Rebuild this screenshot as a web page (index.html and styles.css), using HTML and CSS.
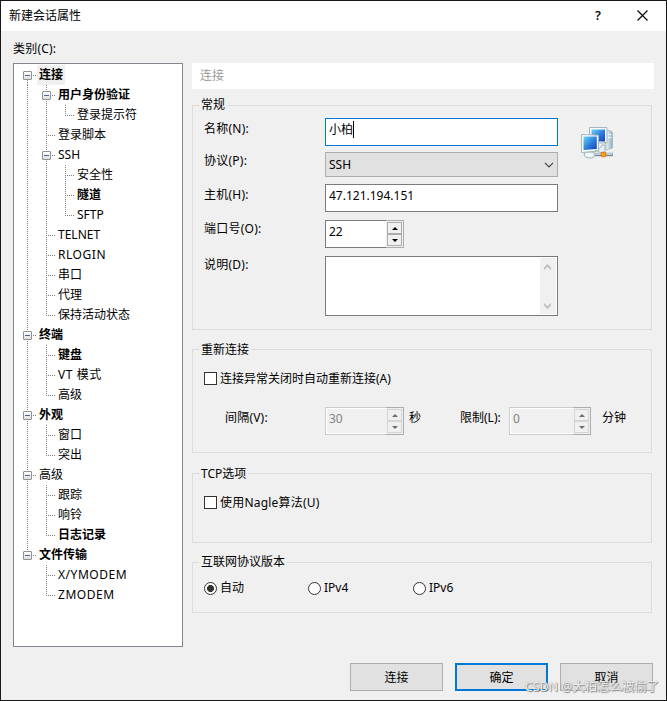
FILE: index.html
```html
<!DOCTYPE html>
<html lang="zh-CN">
<head>
<meta charset="utf-8">
<title>新建会话属性</title>
<link rel="stylesheet" href="styles.css">
</head>
<body>
<div class="window">
  <header class="titlebar">
    <span class="title">新建会话属性</span>
    <span class="help">?</span>
    <svg class="close" width="11" height="11" viewBox="0 0 11 11"><path d="M.5.5l10 10M10.5.5l-10 10" stroke="#000" stroke-width="1.1"/></svg>
  </header>
  <div class="category">类别(C):</div>
  <main class="content">
    <div class="tree">
      <div class="row"><i class="c box first"></i><b class="selected">连接</b></div>
      <div class="row"><i class="c v"></i><i class="c box"></i><b>用户身份验证</b></div>
      <div class="row"><i class="c v"></i><i class="c v"></i><i class="c l"></i><span>登录提示符</span></div>
      <div class="row"><i class="c v"></i><i class="c t"></i><span>登录脚本</span></div>
      <div class="row"><i class="c v"></i><i class="c box"></i><span>SSH</span></div>
      <div class="row"><i class="c v"></i><i class="c v"></i><i class="c t"></i><span>安全性</span></div>
      <div class="row"><i class="c v"></i><i class="c v"></i><i class="c t"></i><b>隧道</b></div>
      <div class="row"><i class="c v"></i><i class="c v"></i><i class="c l"></i><span>SFTP</span></div>
      <div class="row"><i class="c v"></i><i class="c t"></i><span>TELNET</span></div>
      <div class="row"><i class="c v"></i><i class="c t"></i><span class="loose">RLOGIN</span></div>
      <div class="row"><i class="c v"></i><i class="c t"></i><span>串口</span></div>
      <div class="row"><i class="c v"></i><i class="c t"></i><span>代理</span></div>
      <div class="row"><i class="c v"></i><i class="c l"></i><span>保持活动状态</span></div>
      <div class="row"><i class="c box"></i><b>终端</b></div>
      <div class="row"><i class="c v"></i><i class="c t"></i><b>键盘</b></div>
      <div class="row"><i class="c v"></i><i class="c t"></i><span class="loose">VT 模式</span></div>
      <div class="row"><i class="c v"></i><i class="c l"></i><span>高级</span></div>
      <div class="row"><i class="c box"></i><b>外观</b></div>
      <div class="row"><i class="c v"></i><i class="c t"></i><span>窗口</span></div>
      <div class="row"><i class="c v"></i><i class="c l"></i><span>突出</span></div>
      <div class="row"><i class="c box"></i><span>高级</span></div>
      <div class="row"><i class="c v"></i><i class="c t"></i><span>跟踪</span></div>
      <div class="row"><i class="c v"></i><i class="c t"></i><span>响铃</span></div>
      <div class="row"><i class="c v"></i><i class="c l"></i><b>日志记录</b></div>
      <div class="row"><i class="c box last"></i><b>文件传输</b></div>
      <div class="row"><i class="c"></i><i class="c t"></i><span class="loose">X/YMODEM</span></div>
      <div class="row"><i class="c"></i><i class="c l"></i><span class="loose">ZMODEM</span></div>
    </div>
    <div class="panel">
      <div class="heading">连接</div>

      <section class="group general">
        <div class="legend">常规</div>
        <div class="fields">
          <span class="label">名称(N):</span>
          <div class="input focused">小柏<i class="caret"></i></div>
          <span class="label up">协议(P):</span>
          <div class="select">SSH<svg width="10" height="6" viewBox="0 0 10 6"><path d="M1 .8l4 4 4-4" fill="none" stroke="#444" stroke-width="1.2"/></svg></div>
          <span class="label">主机(H):</span>
          <div class="input">47.121.194.151</div>
          <span class="label up">端口号(O):</span>
          <div class="spin"><span>22</span><div class="arrows"><i class="inc"></i><i class="dec"></i></div></div>
          <span class="label up">说明(D):</span>
          <div class="area"><div class="scroll">
            <svg width="7" height="6" viewBox="0 0 7 6"><path d="M0 6V3.4L3.5 0 7 3.4V6L3.5 2.8z" fill="#bfbfbf"/></svg>
            <svg width="7" height="6" viewBox="0 0 7 6"><path d="M0 0v2.6L3.5 6 7 2.6V0L3.5 3.2z" fill="#bfbfbf"/></svg>
          </div></div>
        </div>
        <svg class="network" width="34" height="34" viewBox="0 0 34 34">
          <defs>
            <linearGradient id="screen" x1="0" y1="0" x2="1" y2="1"><stop offset="0" stop-color="#70d3fa"/><stop offset=".5" stop-color="#2f83dd"/><stop offset="1" stop-color="#153eb5"/></linearGradient>
            <linearGradient id="tower" x1="0" x2="1"><stop offset="0" stop-color="#eef8fc"/><stop offset="1" stop-color="#91adbd"/></linearGradient>
          </defs>
          <path d="M26 4l5 1 1.5 1.5v15.5L26 24z" fill="url(#tower)" stroke="#9bb2bf" stroke-width=".7"/>
          <path d="M28 8l3.5.8M28 11l3.5.8" stroke="#fff"/>
          <path d="M9.5 1.5h17.5v15.500h-17.500z" fill="#f7fafb" stroke="#a3b6c1"/>
          <path d="M11.500 3.500h13.500v12h-13.500z" fill="url(#screen)"/>
          <path d="M17 24l3-2 2-3h3v8h-4z" fill="#e6eff2" stroke="#899da8" stroke-width=".7"/>
          <path d="M13 28.500h20" stroke="#71889a" stroke-width="3.400"/>
          <path d="M13 28h19.500" stroke="#e1ebf0" stroke-width="1.400"/>
          <path d="M5 26h8l2 3c-1 4-9 4-11 0z" fill="#f0f5f7" stroke="#98aeba"/>
          <path d="M1.500 8.500l17 .7v15.800l-17 1.500z" fill="#fbfdfd" stroke="#a3b6c1"/>
          <path d="M3.500 10.500h13.300v12.500l-13.300 1z" fill="url(#screen)"/>
          <rect x="21.200" y="26.200" width="4.600" height="4.600" rx="1" fill="#ff9d0a" stroke="#cb6b0b" stroke-width=".7"/>
          <path d="M15 24.500h2M24 16.500h2" stroke="#77d62d"/>
        </svg>
      </section>

      <section class="group reconnect">
        <div class="legend">重新连接</div>
        <label class="option"><i class="check"></i>连接异常关闭时自动重新连接(A)</label>
        <div class="timing">
          <span class="interval">间隔(V):</span>
          <div class="spin disabled"><span>30</span><div class="arrows"><i class="inc"></i><i class="dec"></i></div></div>
          <span class="seconds">秒</span>
          <span class="limit">限制(L):</span>
          <div class="spin disabled wide"><span>0</span><div class="arrows"><i class="inc"></i><i class="dec"></i></div></div>
          <span class="minutes">分钟</span>
        </div>
      </section>

      <section class="group tcp">
        <div class="legend">TCP选项</div>
        <label class="option"><i class="check"></i>使用Nagle算法(U)</label>
      </section>

      <section class="group ip">
        <div class="legend">互联网协议版本</div>
        <div class="radios">
          <label class="option"><i class="radio on"></i>自动</label>
          <label class="option"><i class="radio"></i>IPv4</label>
          <label class="option"><i class="radio"></i>IPv6</label>
        </div>
      </section>
    </div>
  </main>
  <footer class="buttons">
    <div class="button">连接</div>
    <div class="button default">确定</div>
    <div class="button">取消</div>
  </footer>
  <div class="watermark">CSDN @大柏怎么被偷了</div>
</div>
</body>
</html>
```
FILE: styles.css
```css
*, *::before { box-sizing: border-box; }
body {
  margin: 0;
  font: 12px/20px "Noto Sans", "Noto Sans CJK SC", sans-serif;
  color: #000;
}
i { font-style: normal; }
svg { display: block; }
.window {
  position: relative;
  width: 667px;
  height: 701px;
  border: 1px solid #171717;
  background: #f0f0f0;
  overflow: hidden;
}
.titlebar {
  display: flex;
  align-items: center;
  height: 30px;
  padding: 0 18px 0 8px;
  background: #fff;
}
.title { flex: 1; }
.help { font: 600 13px/20px "Open Sans", sans-serif; margin: -2px 36px 0 0; }
.close { margin-top: -1px; }
.category { height: 32px; padding: 8px 0 0 12px; letter-spacing: .2px; }
.content { display: flex; gap: 9px; padding-left: 12px; }

/* Category tree */
.tree {
  width: 170px;
  height: 584px;
  padding: 1px 0 0 4px;
  border: 1px solid #828790;
  background: #fff;
}
.row { display: flex; height: 20px; white-space: nowrap; }
.row b, .row span { padding: 0 2px; line-height: 19px; }
.row .selected { background: #f0f0f0; }
.row .loose { letter-spacing: .55px; }
.c {
  --v: repeating-linear-gradient(#808080 0 1px, transparent 1px 2px);
  --h: repeating-linear-gradient(90deg, #808080 0 1px, transparent 1px 2px);
  flex: none;
  width: 19px;
  background-repeat: no-repeat;
}
.v { background: var(--v) 9px 0 / 1px 20px no-repeat; }
.t { background: var(--v) 9px 0 / 1px 20px no-repeat, var(--h) 9px 10px / 9px 1px no-repeat; }
.l { background: var(--v) 9px 0 / 1px 11px no-repeat, var(--h) 9px 10px / 9px 1px no-repeat; }
.box {
  padding: 6px 5px 5px;
  background: var(--v) 9px 0 / 1px 20px no-repeat, var(--h) 15px 10px / 3px 1px no-repeat;
}
.box.first { background: var(--v) 9px 15px / 1px 5px no-repeat, var(--h) 15px 10px / 3px 1px no-repeat; }
.box.last { background: var(--v) 9px 0 / 1px 7px no-repeat, var(--h) 15px 10px / 3px 1px no-repeat; }
.box::before {
  content: "";
  display: block;
  width: 9px;
  height: 9px;
  border: 1px solid #919191;
  border-radius: 1px;
  background: linear-gradient(#4b63a7, #4b63a7) center / 5px 1px no-repeat, linear-gradient(#fff, #dedede);
}

/* Settings panel */
.panel { width: 462px; }
.heading {
  height: 26px;
  padding: 3px 8px;
  background: #fff;
  color: #999;
}
.group { width: 460px; padding: 0 0 0 11px; border: 1px solid #dcdcdc; }
.legend {
  width: max-content;
  height: 20px;
  margin: -11px 0 0 -5px;
  padding: 0 2px;
  background: #f0f0f0;
}
.general { display: flex; height: 225px; margin-top: 16px; }
.general .legend { width: 28px; flex: none; margin-right: -23px; }
.fields {
  display: grid;
  grid-template-columns: 121px 233px;
  grid-template-rows: 34px 32px 36px 36px 60px;
  align-content: start;
  align-items: start;
  padding-top: 12px;
}
.label { padding-top: 1px; letter-spacing: .25px; }
.label.up { margin-top: -2px; }
.input, .select, .area { border: 1px solid #7a7a7a; background: #fff; }
.input { display: flex; height: 28px; padding: 1px 3px; }
.input.focused { border-color: #0078d7; }
.caret { width: 1px; height: 17px; margin-top: 1px; background: #000; }
.select {
  display: flex;
  align-items: center;
  justify-content: space-between;
  height: 25px;
  padding: 0 3px;
  border-color: #adadad;
  background: #e1e1e1;
}
.spin {
  display: flex;
  width: 79px;
  height: 28px;
  border: 1px solid #7a7a7a;
  background: #fff;
}
.spin > span { flex: 1; padding: 1px 3px; }
.arrows {
  display: flex;
  flex-direction: column;
  width: 18px;
  margin: -1px;
  padding: 1px;
  border: 1px solid #adadad;
  border-left: 0;
  background: #f0f0f0;
}
.arrows i {
  display: flex;
  align-items: center;
  justify-content: center;
  width: 15px;
  height: 12px;
  border: 1px solid #adadad;
}
.arrows i::before { content: ""; border: 3px solid transparent; }
.inc::before { margin-top: -3px; border-bottom-color: #000 !important; }
.dec::before { margin-bottom: -3px; border-top-color: #000 !important; }
.disabled { border-color: #ccc; box-shadow: inset 0 0 0 1px #fff; background: #f0f0f0; color: #838383; }
.disabled .arrows i { border-color: #d5d5d5; }
.disabled .inc::before { border-bottom-color: #6d6d6d !important; }
.disabled .dec::before { border-top-color: #6d6d6d !important; }
.wide { width: 82px; }
.area { display: flex; justify-content: flex-end; height: 60px; padding: 1px; }
.scroll {
  display: flex;
  flex-direction: column;
  align-items: center;
  justify-content: space-between;
  width: 16px;
  padding: 6px 1px 5px 0;
  background: #f0f0f0;
}
.network { margin: 20px 0 0 22px; }
.reconnect { height: 104px; margin-top: 19px; }
.reconnect .legend, .tcp .legend { padding-top: 1px; }
.option { display: flex; align-items: center; height: 20px; }
.check, .radio { width: 13px; height: 13px; margin-right: 3px; border: 1px solid #333; background: #fff; }
.check { margin-bottom: 2px; }
.reconnect .option { margin-top: 10px; }
.timing { display: flex; height: 28px; margin-top: 18px; }
.timing > span { padding-top: 1px; }
.interval { width: 100px; margin-left: 21px; letter-spacing: .2px; }
.seconds { width: 50px; padding-left: 5px; }
.limit { width: 49px; margin-left: 6px; }
.interval + .spin { flex: none; }
.minutes { margin-left: 11px; }
.tcp { height: 70px; margin-top: 20px; }
.tcp .option { margin-top: 10px; letter-spacing: .2px; }
.ip { height: 51px; margin-top: 19px; }
.radios { display: grid; grid-template-columns: 104px 105px 100px; padding-top: 6px; }
.radio { border-radius: 50%; }
.radio.on { background: radial-gradient(circle, #333 0 3.2px, #fff 3.8px); }

.buttons { display: flex; justify-content: flex-end; gap: 12px; padding: 16px 13px 0 0; }
.button {
  width: 93px;
  height: 28px;
  border: 1px solid #adadad;
  background: #e1e1e1;
  line-height: 27px;
  text-align: center;
}
.button.default { border: 2px solid #0078d7; line-height: 25px; }
.watermark {
  position: absolute;
  right: 7px;
  bottom: 3px;
  font-size: 12.4px;
  line-height: 20px;
  white-space: nowrap;
  color: #ededed;
  text-shadow: 1px 1px 1px #888, 0 0 1px #999;
}
```
